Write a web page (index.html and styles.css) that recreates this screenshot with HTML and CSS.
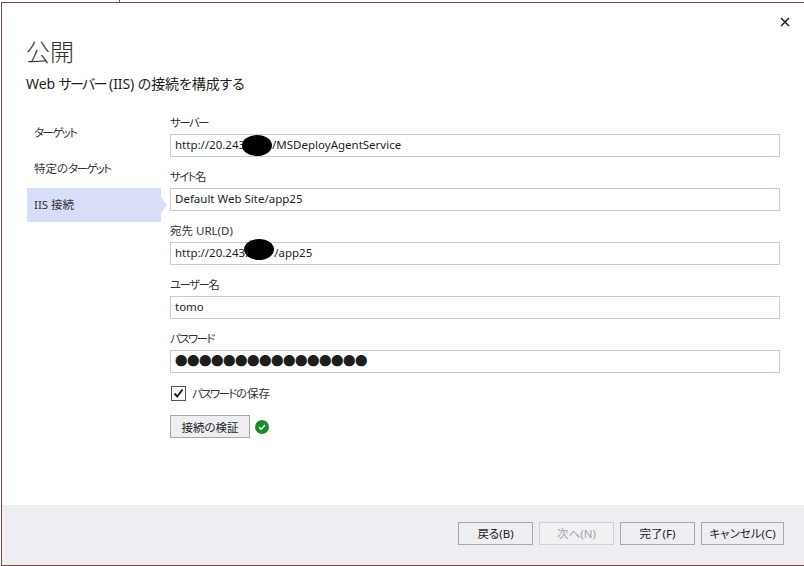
FILE: index.html
```html
<!DOCTYPE html>
<html lang="ja">
<head>
<meta charset="utf-8">
<title>公開</title>
<link rel="stylesheet" href="styles.css">
</head>
<body>
<div class="strip"><span class="tick"></span></div>
<div class="window">
  <div class="main">
    <div class="close-row">
      <svg class="close" width="10" height="10" viewBox="0 0 10 10"><path d="M1 1L9 9M9 1L1 9" stroke="#1e1e1e" stroke-width="1.5" fill="none"/></svg>
    </div>
    <h1 class="title">公開</h1>
    <p class="subtitle">Web <span class="kana-sub">サーバー</span> (IIS) の接続を構成する</p>
    <div class="content">
      <nav class="nav">
        <div class="nav-item"><span class="kana">ターゲット</span></div>
        <div class="nav-item">特定の<span class="kana">ターゲット</span></div>
        <div class="nav-item active">IIS 接続</div>
      </nav>
      <div class="form">
        <div class="field">
          <label class="label"><span class="kana">サーバー</span></label>
          <div class="input">http://20.243<span class="blob blob-a"></span><span class="gap-a"></span>/MSDeployAgentService</div>
        </div>
        <div class="field">
          <label class="label"><span class="kana">サイト</span>名</label>
          <div class="input">Default Web Site/app25</div>
        </div>
        <div class="field">
          <label class="label">宛先 URL(D)</label>
          <div class="input">http://20.243.<span class="blob blob-b"></span><span class="gap-b"></span>/app25</div>
        </div>
        <div class="field">
          <label class="label"><span class="kana">ユーザー</span>名</label>
          <div class="input">tomo</div>
        </div>
        <div class="field">
          <label class="label"><span class="kana">パスワード</span></label>
          <div class="input dots">●●●●●●●●●●●●●●●●</div>
        </div>
        <div class="check-row">
          <span class="checkbox"><svg width="13" height="13" viewBox="0 0 13 13"><path d="M2.5 6.5L5.2 9.5L10.5 2.5" stroke="#1e1e1e" stroke-width="2" fill="none"/></svg></span>
          <span class="check-label"><span class="kana">パスワード</span>の保存</span>
        </div>
        <div class="verify-row">
          <button class="btn verify">接続の検証</button>
          <svg width="14" height="14" viewBox="0 0 14 14"><circle cx="7" cy="7" r="7" fill="#1b8a2a"/><path d="M4 7.2L6.2 9.2L10 5" stroke="#fff" stroke-width="1.4" fill="none"/></svg>
        </div>
      </div>
    </div>
  </div>
  <div class="footer">
    <button class="btn wide">戻る(B)</button>
    <button class="btn wide disabled">次へ(N)</button>
    <button class="btn wide">完了(F)</button>
    <button class="btn cancel">キャンセル(C)</button>
  </div>
</div>
</body>
</html>
```
FILE: styles.css
```css
* { box-sizing: border-box; }
html, body { margin: 0; padding: 0; }
body {
  width: 804px;
  height: 566px;
  overflow: hidden;
  background: #fff;
  color: #1e1e1e;
  font-family: "Noto Sans", "Noto Sans CJK JP", sans-serif;
  font-size: 11.5px;
  font-feature-settings: "palt";
  display: flex;
  flex-direction: column;
}
.strip { height: 2px; position: relative; }
.tick { display: block; width: 1px; height: 2px; margin-left: 119px; background: #3c7a4a; }
.window {
  flex: 1;
  display: flex;
  flex-direction: column;
  margin-left: 1px;
  border-top: 1px solid #7c4a48;
  border-left: 1px solid #7c4a48;
  border-bottom: 1px solid #7c4a48;
}
.main { flex: 1; padding: 0 24px 0 25px; min-height: 0; }
.close-row { height: 13px; display: flex; justify-content: flex-end; padding-top: 14px; margin-right: -10px; }
.close { display: block; flex: none; }
.title { margin: 18px 0 0 -1px; font-size: 24px; font-weight: 300; line-height: 34px; color: #333; }
.subtitle { margin: 5px 0 0 -1px; font-size: 14px; letter-spacing: -0.1px; line-height: 20px; }
.kana-sub { letter-spacing: -1.7px; }
.kana { letter-spacing: -1.6px; }
.content { display: flex; margin-top: 17px; }
.nav { width: 143px; flex: none; padding-top: 5px; display: flex; flex-direction: column; gap: 2px; }
.nav-item { height: 34px; line-height: 34px; padding-left: 7px; width: 134px; color: #333; position: relative; }
.nav-item.active { background: #d8def8; }
.nav-item.active::after {
  content: "";
  position: absolute;
  left: 100%;
  top: 9px;
  border-left: 6px solid #d8def8;
  border-top: 8px solid transparent;
  border-bottom: 8px solid transparent;
}
.form { flex: 1; }
.field { height: 54px; display: flex; flex-direction: column; }
.label { height: 23px; line-height: 20px; padding-top: 2px; color: #333; }
.input {
  height: 23px;
  border: 1px solid #c8cbdc;
  padding-left: 4px;
  line-height: 20px;
  position: relative;
  white-space: nowrap;
}
.dots { font-size: 12.5px; font-feature-settings: normal; letter-spacing: -0.5px; line-height: 22px; }
.blob { position: absolute; background: #000; border-radius: 50%; }
.blob-a { left: 71px; top: 0; width: 30px; height: 21px; }
.blob-b { left: 73px; top: -4px; width: 30px; height: 21px; }
.gap-a { display: inline-block; width: 27px; }
.gap-b { display: inline-block; width: 26px; }
.check-row { display: flex; align-items: center; gap: 6px; margin-top: 3px; height: 18px; }
.checkbox {
  width: 15px;
  height: 15px;
  margin-left: 1px;
  border: 1px solid #555;
  display: flex;
  align-items: center;
  justify-content: center;
  background: #fff;
}
.check-label { color: #333; }
.verify-row { display: flex; align-items: center; gap: 5px; margin-top: 13px; }
.btn {
  height: 23px;
  padding: 0;
  background: #eeeef2;
  border: 1px solid #a8a8aa;
  color: #1e1e1e;
  font: inherit;
  line-height: 20px;
}
.verify { width: 80px; padding-top: 2px; }
.footer {
  height: 60px;
  flex: none;
  background: #eeeef2;
  display: flex;
  gap: 6px;
  padding: 17px 0 0 456px;
}
.wide { width: 75px; }
.cancel { width: 83px; }
.disabled { border-color: #cfd2de; color: #a2a4a5; background: #f1f1f4; }
```
